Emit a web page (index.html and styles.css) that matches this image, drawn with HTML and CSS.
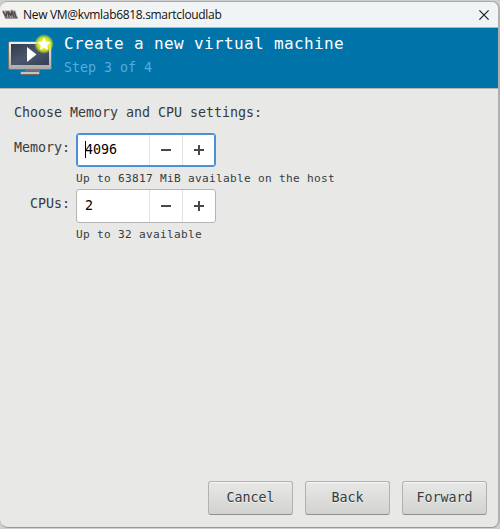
FILE: index.html
```html
<!DOCTYPE html>
<html lang="en">
<head>
<meta charset="utf-8">
<title>New VM</title>
<link rel="stylesheet" href="styles.css">
</head>
<body>
<main class="window">
  <header class="titlebar">
    <svg class="app-icon" width="16" height="12" viewBox="0 0 16 12">
      <path d="M0 1.5H13.5L15.5 9.5H3Z" fill="#a39c9f"/>
      <path d="M1 2.5L4 7.5L5 2.5M7 8.5L6 2.5L9 6.5L10 2.5L12 8.5M12 2.5L14 8.5H15.5" fill="none" stroke="#51484c" stroke-width="1.4"/>
      <path d="M3 9H15" stroke="#777174"/>
    </svg>
    <span class="caption">New VM@kvmlab6818.smartcloudlab</span>
    <svg class="close" width="10" height="10" viewBox="0 0 10 10"><path d="M.4 .4L9.6 9.6M9.6 .4L.4 9.6" stroke="#15191b" stroke-width="1.15"/></svg>
  </header>
  <section class="banner">
    <svg class="vm-icon" width="48" height="44" viewBox="0 0 48 44">
      <defs>
        <linearGradient id="frame" x2="0" y2="1"><stop stop-color="#f2f2f1"/><stop offset="1" stop-color="#aaa9a8"/></linearGradient>
        <linearGradient id="screen" x2="1" y2="1"><stop stop-color="#303b4d"/><stop offset=".5" stop-color="#4a566b"/><stop offset="1" stop-color="#344055"/></linearGradient>
        <radialGradient id="glow"><stop offset=".4" stop-color="#eef71c"/><stop offset=".7" stop-color="#dcea1d" stop-opacity=".85"/><stop offset="1" stop-color="#c5de2a" stop-opacity="0"/></radialGradient>
      </defs>
      <path d="M17 35H32V39H17Z" fill="#77797a"/>
      <rect x="12.5" y="37.5" width="19" height="3" rx="1" fill="#c4c4c3" stroke="#6e6a69"/>
      <rect x=".5" y="7.5" width="43" height="28" rx="1.5" fill="url(#frame)" stroke="#77726e"/>
      <rect x="3" y="10" width="38" height="21" fill="url(#screen)"/>
      <path d="M19 13L28.5 20.5L19 28Z" fill="#fff"/>
      <circle cx="36" cy="10" r="10" fill="url(#glow)"/>
      <path d="M36 3.6L38 7.7L42.3 8.3L39.2 11.4L40 16L36 13.8L32 16L32.8 11.4L29.7 8.3L34 7.7Z" fill="#fff"/>
    </svg>
    <div class="headings">
      <h1>Create a new virtual machine</h1>
      <p>Step 3 of 4</p>
    </div>
  </section>
  <section class="content">
    <p class="intro">Choose Memory and CPU settings:</p>
    <div class="form">
      <span class="label">Memory:</span>
      <div class="field">
        <div class="spin focused"><span class="value"><i class="caret"></i>4096</span><span class="step minus"></span><span class="step plus"></span></div>
        <p class="hint">Up to 63817 MiB available on the host</p>
      </div>
      <span class="label">CPUs:</span>
      <div class="field">
        <div class="spin"><span class="value">2</span><span class="step minus"></span><span class="step plus"></span></div>
        <p class="hint">Up to 32 available</p>
      </div>
    </div>
  </section>
  <footer class="actions">
    <button>Cancel</button>
    <button>Back</button>
    <button>Forward</button>
  </footer>
</main>
</body>
</html>
```
FILE: styles.css
```css
* { box-sizing: border-box; }
body {
  margin: 0;
  padding-top: 1px;
  height: 529px;
  overflow: hidden;
  background: #cfcfcf;
  font: 13.333px/16px "DejaVu Sans Mono", monospace;
  letter-spacing: -0.027px;
  color: #363c3e;
}
h1, p { margin: 0; font-weight: normal; }
.window {
  display: flex;
  flex-direction: column;
  width: 500px;
  height: 527px;
  border: solid #a9a9a9;
  border-width: 1px 2px 1px 0;
  border-right-color: #b0b0b0;
  border-bottom-color: #999;
  border-radius: 8px;
  background: #e8e8e7;
  overflow: hidden;
}
.titlebar {
  display: flex;
  align-items: center;
  height: 26px;
  flex: none;
  padding: 0 9px 0 2px;
  border-bottom: 1px solid #b4b5b5;
  background: linear-gradient(90deg, #f2f3ee, #eff4f7 45%);
}
.caption {
  margin-left: 5px;
  flex: 1;
  font: 12px/16px "Open Sans", sans-serif;
  letter-spacing: -0.32px;
  color: #111;
}
.banner {
  display: flex;
  flex: none;
  height: 61px;
  padding-left: 8px;
  background: #0073a9;
  border-bottom: 1px solid #b2b6b7;
}
.vm-icon { margin-top: 6px; }
.headings { margin-left: 8px; padding-top: 6px; }
h1 {
  font-size: 16px;
  line-height: 20px;
  letter-spacing: 0.367px;
  color: #fff;
}
.headings p { margin-top: 6px; color: #52aee0; }
.content { flex: 1; padding: 16px 14px 0; }
.form {
  display: grid;
  grid-template-columns: 56px 1fr;
  column-gap: 6px;
  margin-top: 12px;
}
.label { padding-top: 7px; text-align: right; }
.field { height: 56px; }
.spin {
  display: flex;
  width: 140px;
  height: 34px;
  border: 1px solid #b5b5b2;
  border-radius: 3px;
  background: #fff;
}
.spin.focused { border-color: #4a90d9; box-shadow: inset 0 0 0 1px #4a90d9; }
.value {
  position: relative;
  width: 72px;
  padding: 8px 0 0 8px;
  color: #000;
}
.caret {
  position: absolute;
  left: 8px;
  top: 7px;
  width: 1px;
  height: 17px;
  background: #000;
}
.step {
  display: grid;
  place-items: center;
  width: 33px;
  border-left: 1px solid #e3e3e2;
}
.focused .step { margin: 1px 0; }
.step::before, .step.plus::after {
  content: "";
  grid-area: 1 / 1;
  width: 10px;
  height: 2px;
  background: #454b4d;
}
.step.plus::after { width: 2px; height: 10px; }
.hint {
  margin-top: 5px;
  font-size: 11.111px;
  line-height: 14px;
  letter-spacing: 0.311px;
}
.actions {
  display: flex;
  justify-content: flex-end;
  gap: 12px;
  padding: 0 11px 12px 0;
}
button {
  width: 85px;
  height: 34px;
  padding: 0;
  border: 1px solid #b1b1ae;
  border-bottom-color: #8f8f8c;
  border-radius: 3px;
  background: linear-gradient(#e8e8e7, #d2d2d0);
  box-shadow: inset 0 1px #f7f7f7;
  font: inherit;
  letter-spacing: inherit;
  color: #363c3e;
  text-shadow: 0 1px #f1f1f0;
}
```
